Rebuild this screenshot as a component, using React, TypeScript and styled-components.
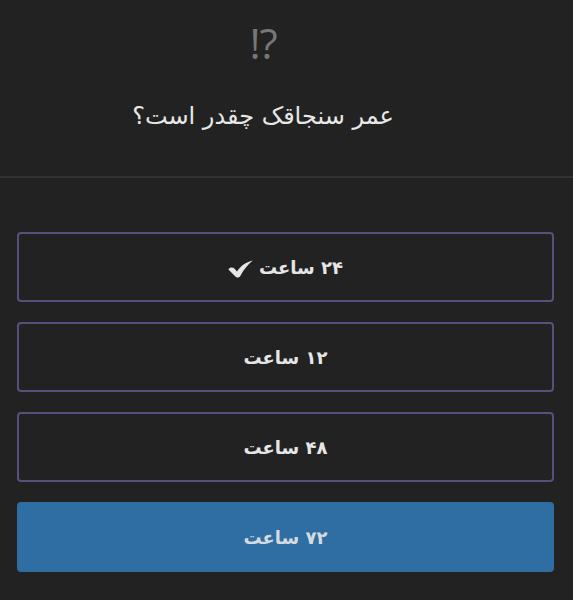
import React from 'react';
import styled, { createGlobalStyle } from 'styled-components';

const GlobalStyle = createGlobalStyle`
  html, body {
    margin: 0;
    padding: 0;
    background: #222222;
  }
  body {
    font-family: 'DejaVu Sans', 'Noto Sans', sans-serif;
  }
`;

const Screen = styled.div`
  width: 573px;
  height: 600px;
  background: #222222;
  direction: rtl;
  display: flex;
  flex-direction: column;
  overflow: hidden;
`;

const Header = styled.header`
  display: flex;
  flex-direction: column;
  align-items: center;
  padding-top: 18px;
  padding-right: 47px;
  height: 178px;
  box-sizing: border-box;
  border-bottom: 2px solid #333333;
`;

const Mark = styled.div`
  direction: ltr;
  color: #777777;
  font-family: 'Open Sans', sans-serif;
  font-size: 42px;
  line-height: 50px;
  letter-spacing: -1px;
`;

const Question = styled.h1`
  margin: 32px 0 0;
  color: #e8e8e8;
  font-size: 24px;
  font-weight: normal;
  line-height: 32px;
`;

const Options = styled.div`
  display: flex;
  flex-direction: column;
  gap: 20px;
  padding: 54px 19px 0 17px;
`;

const Option = styled.button<{ $filled?: boolean }>`
  height: 70px;
  width: 100%;
  display: flex;
  align-items: center;
  justify-content: center;
  gap: 6px;
  border-radius: 4px;
  border: 2px solid ${(p) => (p.$filled ? '#2f6ea2' : '#56517a')};
  background: ${(p) => (p.$filled ? '#2f6ea2' : '#222222')};
  color: ${(p) => (p.$filled ? '#d6dbe0' : '#e6e6e6')};
  font-family: 'DejaVu Sans', sans-serif;
  font-size: 18px;
  font-weight: bold;
  direction: rtl;
  cursor: pointer;
  padding: 0;
`;

const CheckIcon = styled.svg`
  width: 25px;
  height: 18px;
  margin-top: 3px;
  fill: #e6e6e6;
`;

function Check() {
  return (
    <CheckIcon viewBox="0 0 25 18" aria-hidden="true">
      <path d="M0.4 9.4 C2 7 4.8 7 6.6 8.8 L9 11.4 C12.6 6 17.6 2 24.8 0.4 C19.8 4.4 15.6 9.6 12.2 16.2 C11.2 17.8 8.6 18 7.4 16.6 Z" />
    </CheckIcon>
  );
}

const answers = [
  { label: '۲۴ ساعت', correct: true },
  { label: '۱۲ ساعت' },
  { label: '۴۸ ساعت' },
  { label: '۷۲ ساعت', filled: true },
];

export default function App() {
  return (
    <>
      <GlobalStyle />
      <Screen>
        <Header>
          <Mark>!?</Mark>
          <Question>عمر سنجاقک چقدر است؟</Question>
        </Header>
        <Options>
          {answers.map((a) => (
            <Option key={a.label} $filled={a.filled}>
              <span>{a.label}</span>
              {a.correct && <Check />}
            </Option>
          ))}
        </Options>
      </Screen>
    </>
  );
}
